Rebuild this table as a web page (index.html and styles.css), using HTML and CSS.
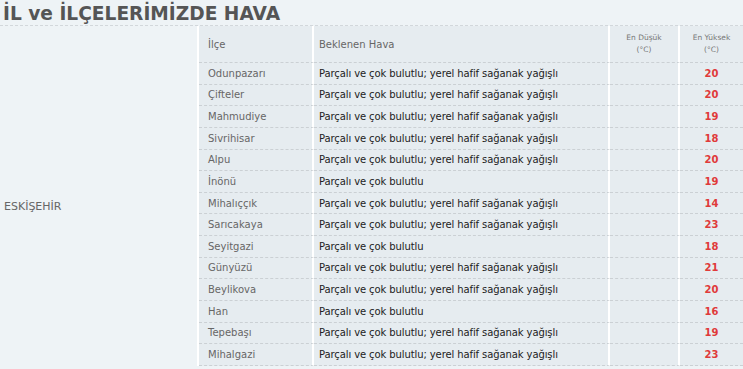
FILE: index.html
```html
<!DOCTYPE html>
<html lang="tr">
<head>
<meta charset="utf-8">
<link rel="stylesheet" href="styles.css">
</head>
<body>
<h1 class="title">İL ve İLÇELERİMİZDE HAVA</h1>
<div class="main">
  <div class="city">ESKİŞEHİR</div>
  <table class="wx">
    <thead>
      <tr>
        <th class="c-ilce">İlçe</th>
        <th class="c-hava">Beklenen Hava</th>
        <th class="c-min">En Düşük<br>(°C)</th>
        <th class="c-max">En Yüksek<br>(°C)</th>
      </tr>
    </thead>
    <tbody>
      <tr><td class="c-ilce">Odunpazarı</td><td class="c-hava">Parçalı ve çok bulutlu; yerel hafif sağanak yağışlı</td><td class="c-min"></td><td class="c-max">20</td></tr>
      <tr><td class="c-ilce">Çifteler</td><td class="c-hava">Parçalı ve çok bulutlu; yerel hafif sağanak yağışlı</td><td class="c-min"></td><td class="c-max">20</td></tr>
      <tr><td class="c-ilce">Mahmudiye</td><td class="c-hava">Parçalı ve çok bulutlu; yerel hafif sağanak yağışlı</td><td class="c-min"></td><td class="c-max">19</td></tr>
      <tr><td class="c-ilce">Sivrihisar</td><td class="c-hava">Parçalı ve çok bulutlu; yerel hafif sağanak yağışlı</td><td class="c-min"></td><td class="c-max">18</td></tr>
      <tr><td class="c-ilce">Alpu</td><td class="c-hava">Parçalı ve çok bulutlu; yerel hafif sağanak yağışlı</td><td class="c-min"></td><td class="c-max">20</td></tr>
      <tr><td class="c-ilce">İnönü</td><td class="c-hava">Parçalı ve çok bulutlu</td><td class="c-min"></td><td class="c-max">19</td></tr>
      <tr><td class="c-ilce">Mihalıççık</td><td class="c-hava">Parçalı ve çok bulutlu; yerel hafif sağanak yağışlı</td><td class="c-min"></td><td class="c-max">14</td></tr>
      <tr><td class="c-ilce">Sarıcakaya</td><td class="c-hava">Parçalı ve çok bulutlu; yerel hafif sağanak yağışlı</td><td class="c-min"></td><td class="c-max">23</td></tr>
      <tr><td class="c-ilce">Seyitgazi</td><td class="c-hava">Parçalı ve çok bulutlu</td><td class="c-min"></td><td class="c-max">18</td></tr>
      <tr><td class="c-ilce">Günyüzü</td><td class="c-hava">Parçalı ve çok bulutlu; yerel hafif sağanak yağışlı</td><td class="c-min"></td><td class="c-max">21</td></tr>
      <tr><td class="c-ilce">Beylikova</td><td class="c-hava">Parçalı ve çok bulutlu; yerel hafif sağanak yağışlı</td><td class="c-min"></td><td class="c-max">20</td></tr>
      <tr><td class="c-ilce">Han</td><td class="c-hava">Parçalı ve çok bulutlu</td><td class="c-min"></td><td class="c-max">16</td></tr>
      <tr><td class="c-ilce">Tepebaşı</td><td class="c-hava">Parçalı ve çok bulutlu; yerel hafif sağanak yağışlı</td><td class="c-min"></td><td class="c-max">19</td></tr>
      <tr><td class="c-ilce">Mihalgazi</td><td class="c-hava">Parçalı ve çok bulutlu; yerel hafif sağanak yağışlı</td><td class="c-min"></td><td class="c-max">23</td></tr>
    </tbody>
  </table>
</div>
</body>
</html>
```
FILE: styles.css
```css
html, body {
  margin: 0;
  padding: 0;
  background: #eef3f6;
  font-family: "DejaVu Sans", Verdana, sans-serif;
  overflow: hidden;
}
.title {
  margin: 0;
  height: 26px;
  padding: 0 0 0 3px;
  font-size: 18.6px;
  line-height: 27px;
  font-weight: bold;
  color: #555;
  border-bottom: 1px dashed #d2d7db;
  box-sizing: border-box;
}
.main {
  display: flex;
  align-items: stretch;
}
.city {
  flex: none;
  width: 199px;
  border-right: 2px solid #fff;
  box-sizing: border-box;
  display: flex;
  align-items: center;
  padding: 22px 0 0 4px;
  font-size: 11px;
  color: #666;
}
.wx {
  border-collapse: separate;
  border-spacing: 0;
  width: 546px;
  table-layout: fixed;
  background: #e6ecf0;
}
.wx th, .wx td {
  padding: 0;
  font-size: 10px;
  border-bottom: 1px dashed #cbd0d4;
  vertical-align: middle;
}
.wx th {
  height: 36px;
  font-weight: normal;
  color: #666;
  text-align: left;
}
.wx td { height: 21.64px; box-sizing: border-box; }
.wx .c-ilce { width: 104px; padding-left: 9px; color: #666; border-right: 2px solid #fff; }
.wx .c-hava { width: 289px; padding-left: 5px; color: #222; border-right: 2px solid #fff; letter-spacing: -0.1px; }
.wx th.c-hava { color: #666; letter-spacing: 0; }
.wx .c-min { width: 68px; border-right: 2px solid #fff; }
.wx .c-max { text-align: center; color: #e03a3a; font-weight: bold; }
.wx th.c-min, .wx th.c-max {
  font-size: 7.5px;
  line-height: 12px;
  text-align: center;
  color: #777;
  font-weight: normal;
}
```
